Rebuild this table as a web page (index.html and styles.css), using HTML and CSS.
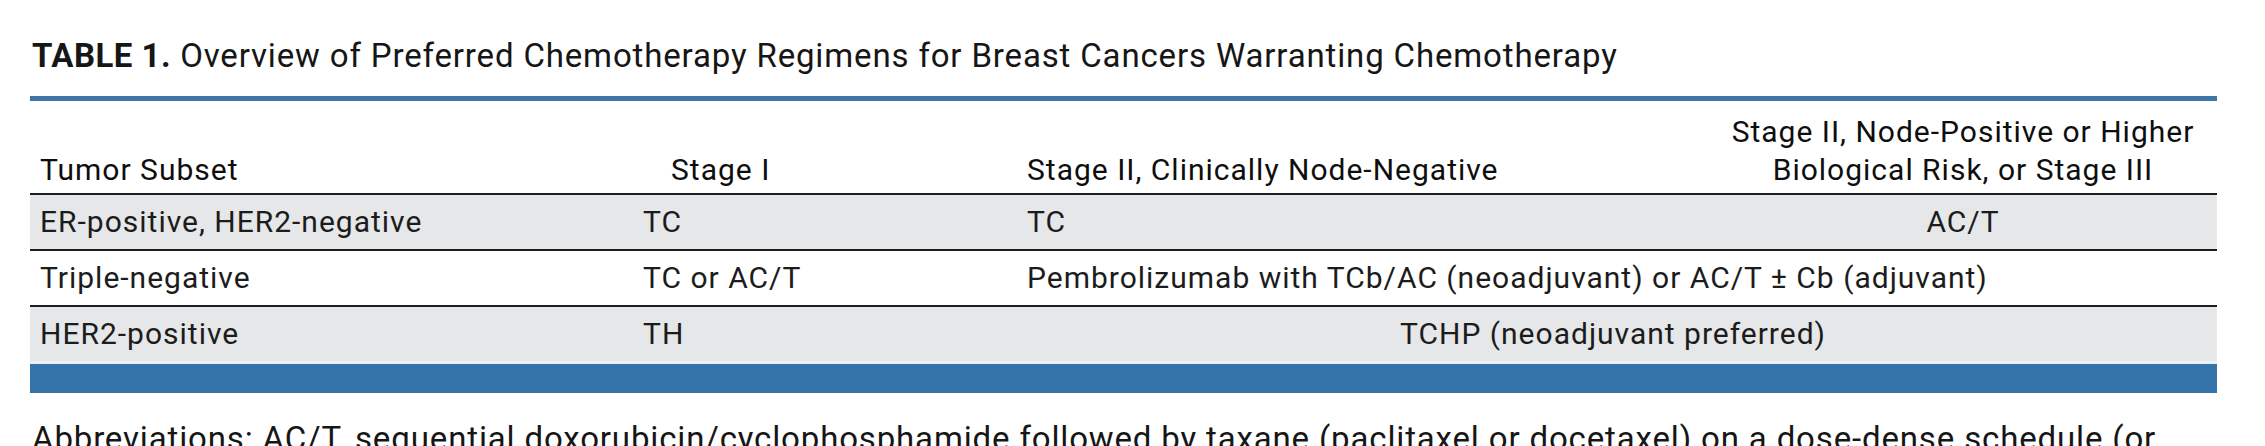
FILE: index.html
```html
<!DOCTYPE html>
<html lang="en">
<head>
<meta charset="utf-8">
<title>Table 1</title>
<link rel="stylesheet" href="styles.css">
</head>
<body>
<div class="page">
  <h1 class="title"><span class="label">TABLE 1.</span> Overview of Preferred Chemotherapy Regimens for Breast Cancers Warranting Chemotherapy</h1>
  <div class="top-rule"></div>
  <table class="regimens">
    <colgroup>
      <col class="c1"><col class="c2"><col class="c3"><col class="c4">
    </colgroup>
    <thead>
      <tr>
        <th class="first">Tumor Subset</th>
        <th class="stage1">Stage I</th>
        <th>Stage II, Clinically Node-Negative</th>
        <th class="center">Stage II, Node-Positive or Higher<br>Biological Risk, or Stage III</th>
      </tr>
    </thead>
    <tbody>
      <tr class="shade">
        <td class="first">ER-positive, HER2-negative</td>
        <td>TC</td>
        <td>TC</td>
        <td class="center">AC/T</td>
      </tr>
      <tr>
        <td class="first">Triple-negative</td>
        <td>TC or AC/T</td>
        <td colspan="2">Pembrolizumab with TCb/AC (neoadjuvant) or AC/T ± Cb (adjuvant)</td>
      </tr>
      <tr class="shade">
        <td class="first">HER2-positive</td>
        <td>TH</td>
        <td colspan="2" class="center">TCHP (neoadjuvant preferred)</td>
      </tr>
    </tbody>
  </table>
  <div class="bottom-bar"></div>
  <p class="note">Abbreviations: AC/T, sequential doxorubicin/cyclophosphamide followed by taxane (paclitaxel or docetaxel) on a dose-dense schedule (or</p>
</div>
</body>
</html>
```

FILE: styles.css
```css
html, body {
  margin: 0;
  padding: 0;
  background: #ffffff;
}

body {
  font-family: Roboto, "Liberation Sans", Arial, sans-serif;
  color: #1c1c1c;
}

.page {
  width: 2187px;
  padding: 36px 0 0 30px;
}

.title {
  margin: 0 0 0 2px;
  font-size: 33px;
  line-height: 40px;
  font-weight: 400;
  letter-spacing: 0.85px;
  color: #161616;
  white-space: nowrap;
}

.title .label {
  font-weight: 700;
  letter-spacing: 0.5px;
}

.top-rule {
  margin-top: 20px;
  height: 5px;
  background: #3f75a6;
}

.regimens {
  width: 2187px;
  border-collapse: collapse;
  table-layout: fixed;
  font-size: 30px;
  letter-spacing: 1px;
}

.c1 { width: 595px; }
.c2 { width: 384px; }
.c3 { width: 700px; }
.c4 { width: 508px; }

.regimens th {
  font-weight: 400;
  color: #0e0e0e;
  text-align: left;
  vertical-align: bottom;
  line-height: 38px;
  padding: 12px 0 4px 18px;
  white-space: nowrap;
}

.regimens th.stage1 {
  padding-left: 46px;
}

.regimens td {
  height: 54px;
  padding: 0 0 0 18px;
  border-top: 2px solid #1e1e1e;
  line-height: 34px;
  vertical-align: middle;
  white-space: nowrap;
}

.regimens .first {
  padding-left: 10px;
}

.regimens .center {
  text-align: center;
  padding-left: 0;
}

.regimens thead th {
  border-bottom: 2px solid #1e1e1e;
}

.shade td {
  background: #e6e7e9;
}

.bottom-bar {
  height: 29px;
  border-top: 3px solid #e9f1f6;
  background: #3574aa;
}

.note {
  margin: 26px 0 0 2px;
  font-size: 33px;
  line-height: 40px;
  letter-spacing: 0.85px;
  color: #161616;
  white-space: nowrap;
}
```
